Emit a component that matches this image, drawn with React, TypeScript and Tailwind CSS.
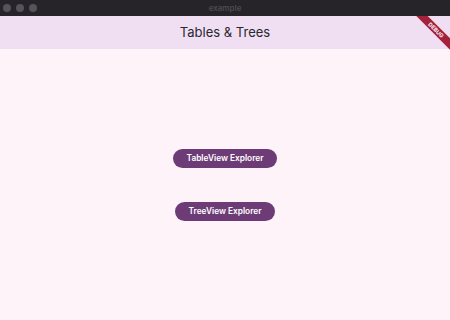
export default function App() {
  return (
    <div className="flex h-[320px] w-[450px] flex-col overflow-hidden bg-[#fdf3f8] font-['Inter',sans-serif]">
      <div className="relative flex h-[16px] shrink-0 items-center bg-[#262428]">
        <div className="flex gap-[5px] pl-[3px]">
          <span className="h-[8px] w-[8px] rounded-full bg-[#56535a]" />
          <span className="h-[8px] w-[8px] rounded-full bg-[#56535a]" />
          <span className="h-[8px] w-[8px] rounded-full bg-[#56535a]" />
        </div>
        <span className="absolute left-1/2 -translate-x-1/2 text-[8px] font-semibold text-[#4d4a50]">example</span>
      </div>
      <div className="relative flex flex-1 flex-col overflow-hidden">
        <div className="flex h-[33px] items-center justify-center bg-[#f0dff3]">
          <h1 className="text-[13px] text-[#2a262d]">Tables &amp; Trees</h1>
        </div>
        <div className="flex flex-1 flex-col items-center pt-[100px]">
          <button className="h-[19px] w-[104px] rounded-full bg-[#6d3c77] text-[8.3px] font-semibold text-white">
            TableView Explorer
          </button>
          <button className="mt-[34px] h-[19px] w-[100px] rounded-full bg-[#6d3c77] text-[8.3px] font-semibold text-white">
            TreeView Explorer
          </button>
        </div>
        <div className="absolute right-[-16px] top-[10px] h-[8px] w-[60px] rotate-45 bg-[#a3213b] text-center text-[5.5px] font-bold leading-[8px] text-white">
          DEBUG
        </div>
      </div>
    </div>
  );
}
